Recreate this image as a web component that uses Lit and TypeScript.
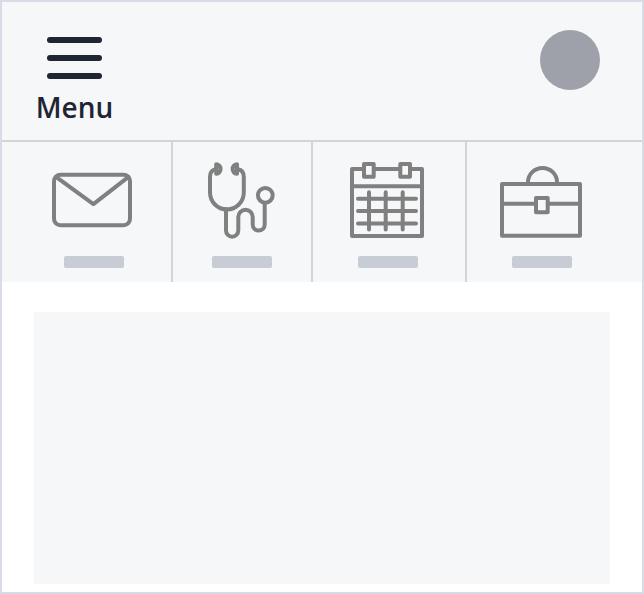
import { LitElement, html, css, svg } from "lit";
import { customElement } from "lit/decorators.js";

const mail = svg`
  <rect x="10" y="16.7" width="76" height="50.6" rx="6.5"></rect>
  <path d="M12 18.8 49.4 46.2 84.5 18.8"></path>`;

const stethoscope = svg`
  <path d="M23.5 11.3C20 12 18 14.5 18 19V34.5a16.9 17 0 0 0 33.8 0V19C51.8 14.5 49.8 12 46 11.3"></path>
  <path d="M24.2 6.2v9.6C30 15.2 30 6.8 24.2 6.2Z"></path>
  <path d="M45 6.2v9.6C39.2 15.2 39.2 6.8 45 6.2Z"></path>
  <path d="M34 51V72.6a6.15 6.15 0 0 0 12.3 0V58.9a7.2 7.2 0 0 1 14.4 0V66.5a6 6 0 0 0 12 0V46"></path>
  <circle cx="73.3" cy="37.3" r="7.4"></circle>`;

const calendar = svg`
  <rect x="14" y="11" width="70" height="67"></rect>
  <path d="M14 28.3H84"></path>
  <rect class="clip" x="26" y="6" width="9.7" height="12.7"></rect>
  <rect class="clip" x="62.3" y="6" width="9.7" height="12.7"></rect>
  <path d="M20 40.7H78M20 53H78M20 65.6H78M31 34.2V71.5M47.7 34.2V71.5M64.7 34.2V71.5"></path>`;

const briefcase = svg`
  <rect x="10" y="26" width="78" height="51.8"></rect>
  <path d="M36 25.5V24a14.5 14 0 0 1 29 0V25.5M10 45.8H88"></path>
  <rect class="clip" x="44" y="40" width="11.7" height="14.3"></rect>`;

const tabs = [
  { name: "mail", icon: mail },
  { name: "care", icon: stethoscope },
  { name: "calendar", icon: calendar },
  { name: "work", icon: briefcase },
];

@customElement("app-root")
export class AppRoot extends LitElement {
  static styles = css`
    :host {
      display: flex;
      flex-direction: column;
      box-sizing: border-box;
      width: 644px;
      height: 594px;
      border: 2px solid #d8dce6;
      background: #fff;
      overflow: hidden;
      font-family: "Open Sans", "Noto Sans", sans-serif;
    }
    header {
      display: flex;
      justify-content: space-between;
      box-sizing: border-box;
      flex: none;
      height: 140px;
      padding: 28px 42px 0 34px;
      background: #f5f7f9;
      border-bottom: 2px solid #d3d4d6;
    }
    .menu {
      display: flex;
      flex-direction: column;
      align-items: center;
      width: 77px;
      padding-top: 7px;
      color: #1f2533;
    }
    .bars {
      display: grid;
      gap: 12px;
      width: 55px;
    }
    .bar {
      height: 6px;
      border-radius: 3px;
      background: #1f2533;
    }
    .menu-text {
      margin-top: 9px;
      font-size: 28px;
      font-weight: 600;
      line-height: 38px;
    }
    .avatar {
      width: 60px;
      height: 60px;
      border-radius: 50%;
      background: #9ea1a9;
    }
    nav {
      display: grid;
      grid-template-columns: 171px 140px 154px 175px;
      flex: none;
      height: 140px;
      background: #f5f7f9;
    }
    .tab {
      display: flex;
      flex-direction: column;
      align-items: center;
      box-sizing: border-box;
      padding-top: 16px;
      border-right: 2px solid #d3d4d6;
    }
    .mail {
      padding-left: 15px;
    }
    .calendar {
      padding-right: 2px;
    }
    .work {
      padding-right: 25px;
      border-right: 0;
    }
    svg {
      width: 100px;
      height: 84px;
      fill: none;
      stroke: #808080;
      stroke-width: 4;
      stroke-linecap: round;
      stroke-linejoin: round;
    }
    .clip {
      fill: #f5f7f9;
    }
    .label {
      width: 60px;
      height: 12px;
      margin-top: 14px;
      border-radius: 2px;
      background: #c8ccd5;
    }
    main {
      flex: 1;
      display: flex;
      padding: 30px 32px 8px;
    }
    .panel {
      flex: 1;
      background: #f5f7f9;
    }
  `;

  render() {
    return html`
      <header>
        <div class="menu">
          <div class="bars">
            <div class="bar"></div>
            <div class="bar"></div>
            <div class="bar"></div>
          </div>
          <div class="menu-text">Menu</div>
        </div>
        <div class="avatar"></div>
      </header>
      <nav>
        ${tabs.map(
          (tab) => html`
            <div class="tab ${tab.name}">
              <svg viewBox="0 0 100 84">${tab.icon}</svg>
              <div class="label"></div>
            </div>
          `
        )}
      </nav>
      <main><div class="panel"></div></main>
    `;
  }
}
